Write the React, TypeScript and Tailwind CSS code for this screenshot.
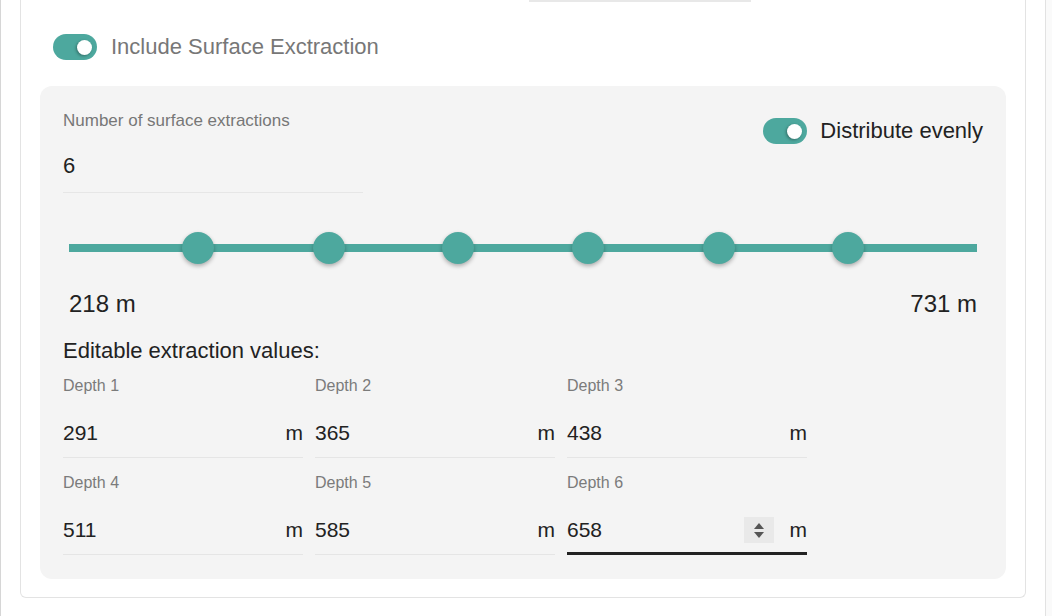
import React from 'react';

// depth range and the evenly spread extraction points
const MIN_DEPTH = 218;
const MAX_DEPTH = 731;
const depths = [291, 365, 438, 511, 585, 658];

const Toggle: React.FC = () => (
  <div className="relative h-[26px] w-[44px] shrink-0 rounded-full bg-[#4da89e]">
    <div className="absolute right-[5px] top-[5.5px] h-[15px] w-[15px] rounded-full bg-white shadow-[-1px_1px_3px_rgba(0,0,0,0.35)]" />
  </div>
);

const SpinButton: React.FC = () => (
  <div className="mr-[16px] flex h-[26px] w-[30px] flex-col items-center justify-center gap-[3px] bg-[#e9e9e9]">
    <svg width="10" height="6" viewBox="0 0 10 6">
      <path d="M5 0 L10 6 L0 6 Z" fill="#555" />
    </svg>
    <svg width="10" height="6" viewBox="0 0 10 6">
      <path d="M0 0 L10 0 L5 6 Z" fill="#555" />
    </svg>
  </div>
);

const DepthField: React.FC<{ label: string; value: number; focused?: boolean }> = ({ label, value, focused }) => (
  <div className="flex flex-col">
    <div className="h-[20px] text-[16px] leading-[20px] text-[#7b7b7b]">{label}</div>
    <div
      className={
        focused
          ? 'mt-[23px] border-b-[3px] border-[#222] pb-[8px]'
          : 'mt-[23px] border-b border-[#e5e5e5] pb-[10px]'
      }
    >
      <div className="flex h-[28px] items-center text-[21px] leading-[28px] text-[#222]">
        <span className="flex-1">{value}</span>
        {focused && <SpinButton />}
        <span>m</span>
      </div>
    </div>
  </div>
);

export default function App() {
  return (
    <div className="flex h-[616px] w-[1052px] overflow-hidden bg-white font-['Liberation_Sans',Arial,sans-serif]">
      <div className="w-px bg-[#d6d6d6]" />

      <div className="flex-1 px-[19px]">
        <div className="rounded-b-[6px] border border-t-0 border-[#e3e3e3] pb-[18px]">
          <div className="ml-[508px] h-[2px] w-[222px] bg-[#e8e8e8]" />

          <div className="mt-[32px] flex items-center gap-[14px] pl-[32px]">
            <Toggle />
            <span className="text-[22px] leading-[26px] text-[#777]">Include Surface Exctraction</span>
          </div>

          <div className="mx-[19px] mt-[26px] rounded-[12px] bg-[#f4f4f4] px-[23px] pb-[24px] pt-[25px]">
            <div className="flex items-start justify-between">
              <div className="w-[300px]">
                <div className="text-[17px] leading-[20px] text-[#777]">Number of surface extractions</div>
                <div className="mt-[21px] border-b border-[#e6e6e6] pb-[12px]">
                  <div className="h-[28px] text-[22px] leading-[28px] text-[#222]">6</div>
                </div>
              </div>
              <div className="mt-[7px] flex items-center gap-[13px]">
                <Toggle />
                <span className="text-[22px] leading-[26px] text-[#222]">Distribute evenly</span>
              </div>
            </div>

            {/* range slider with one thumb per extraction */}
            <div className="relative mx-[6px] mt-[35px] h-[40px]">
              <div className="absolute left-0 right-0 top-[16px] h-[8px] bg-[#4da89e]" />
              {depths.map((d) => (
                <div
                  key={d}
                  className="absolute top-[4px] -ml-[16px] h-[32px] w-[32px] rounded-full bg-[#4da89e] shadow-[0_2px_4px_rgba(0,0,0,0.3)]"
                  style={{ left: `${((d - MIN_DEPTH) / (MAX_DEPTH - MIN_DEPTH)) * 100}%` }}
                />
              ))}
            </div>

            <div className="mx-[6px] mt-[22px] flex justify-between text-[24px] leading-[28px] text-[#222]">
              <span>{MIN_DEPTH} m</span>
              <span>{MAX_DEPTH} m</span>
            </div>

            <div className="mt-[19px] text-[22px] leading-[28px] text-[#222]">Editable extraction values:</div>

            <div className="mt-[11px] grid grid-cols-[240px_240px_240px] gap-x-[12px] gap-y-[15px]">
              {depths.map((d, i) => (
                <DepthField key={i} label={`Depth ${i + 1}`} value={d} focused={i === depths.length - 1} />
              ))}
            </div>
          </div>
        </div>
      </div>

      <div className="w-[7px] border-l border-[#e2e2e2] bg-[#fafafa]" />
    </div>
  );
}
